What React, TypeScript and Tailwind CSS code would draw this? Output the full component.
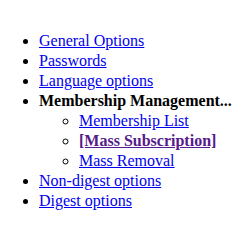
export default function App() {
  const link = 'text-[#0000EE] underline';
  return (
    <div className="w-[235px] h-[228px] bg-white pt-[31px] font-['Liberation_Serif',serif] text-[16px] leading-[20px] text-black">
      <ul className="list-disc pl-[39px]">
        <li><a href="#" className={link}>General Options</a></li>
        <li><a href="#" className={link}>Passwords</a></li>
        <li><a href="#" className={link}>Language options</a></li>
        <li>
          <strong className="font-bold">Membership Management...</strong>
          <ul className="list-[circle] pl-[40px]">
            <li><a href="#" className={link}>Membership List</a></li>
            <li><a href="#" className="text-[#551A8B] underline font-bold">[Mass Subscription]</a></li>
            <li><a href="#" className={link}>Mass Removal</a></li>
          </ul>
        </li>
        <li><a href="#" className={link}>Non-digest options</a></li>
        <li><a href="#" className={link}>Digest options</a></li>
      </ul>
    </div>
  );
}
